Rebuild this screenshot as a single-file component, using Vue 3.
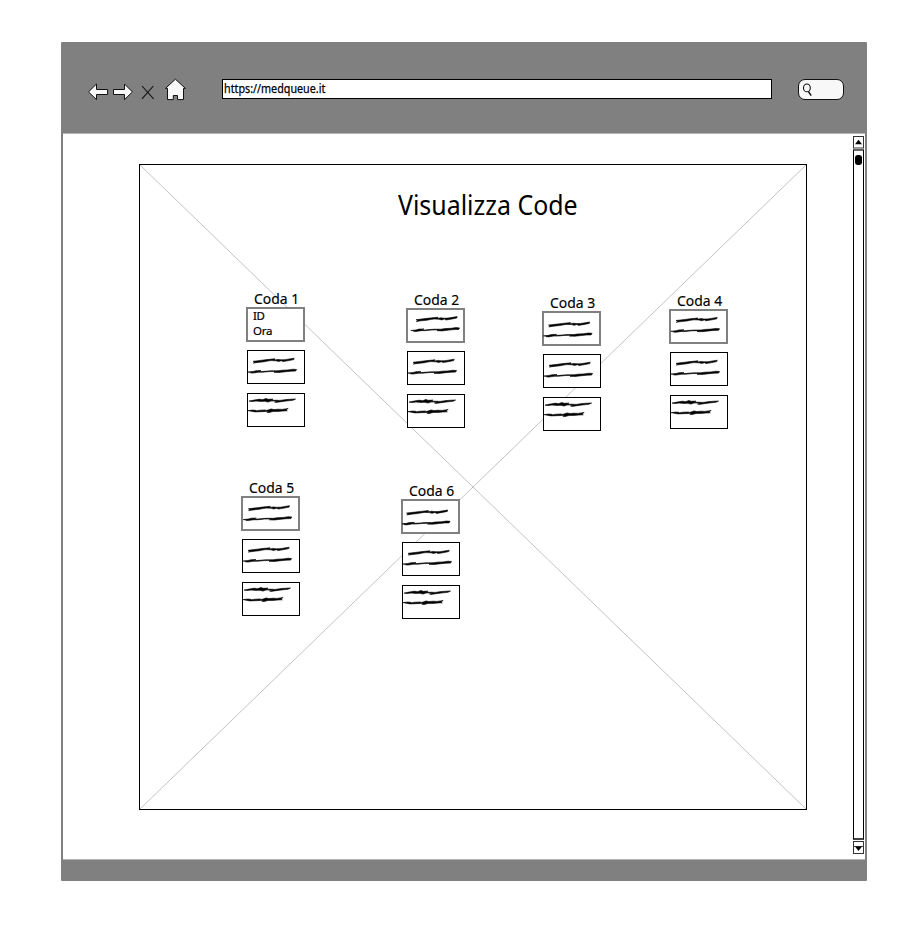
<script setup>
const rows = [
  [
    { n: 1, lines: ['ID', 'Ora'] },
    { n: 2, dx: 3, dy: -0.6 },
    { n: 3, dx: -0.5, dy: 1.8 },
    { n: 4, dx: 0, dy: -0.8 },
  ],
  [
    { n: 5, dx: 0.3, dy: 0.5 },
    { n: 6, dx: -1.5, dy: 1.8 },
  ],
]

const wide =
  'M6 11.3L15 10.2L20 9.6L28 8.8L27.2 10L31 9.4L34 9.8L38 9.7L41 9.2L47.2 8.2L46.8 9.6L42 10.6L36 11.6L34.5 10.7L31.5 11.5L29 10.8L24 10.6L20.5 11.1L17 11.8L11 12.4L6.3 13.1L7.8 12Z' +
  'M0.8 22.1L6 21.5L9 20.7L14 20.6L10.5 21.5L15 21.5L20 21.1L24 20.8L31 20.8L35 20.2L41 19.9L46 19.2L49.6 19.5L48.6 21.1L44 21.2L39 21.7L32 22.5L27 22.3L29 21.5L22 21.6L16 22.2L11 22.3L6 23.1L3.5 22.8L5 22.4Z'
const short =
  'M2 8.1L7 7.1L12 6.2L14.5 6.5L11 7.6L16 6.6L19 5.4L21 6.3L26 6.1L23.5 7.2L28 7.2L33 7.4L39 6.6L44 6.2L48.6 6L46 7.3L41 7.8L36 8.4L29 9.4L27.5 8.9L31 8L24 8L21 9.1L18 8.3L14 8.4L9 8.1L5 8.6Z' +
  'M1 17.6L6 17L9 17.4L7.5 18L13 17.2L18.5 17L16.5 17.9L21 17.1L24 15.9L27 16.6L31 16.2L35 16.4L41.2 15.5L39 16.8L40.3 17.8L36 18L31 18.4L26 18.5L22 19.6L19.8 19.2L22 18.3L14 18.7L8 18.9L4 18.2Z'
</script>

<template>
  <div class="page">
    <div class="browser">
      <header class="toolbar">
        <svg class="nav" width="100" height="24" viewBox="87 78 100 24">
          <g fill="#f8f8f8" stroke="#111" stroke-width="1">
            <path d="M88.5 91.9L96.5 84V89.5H107.6V94.5H96.5V99.6Z" />
            <path d="M132.4 91.9L124.5 84V89.5H113.5V94.5H124.5V99.6Z" />
            <path d="M175.4 79.2L165.5 88.4H167.5V99.6H173.3V95.5H177.5V99.6H183.5V88.4H185.4Z" />
          </g>
          <path d="M142 86L153.6 98.8M153.3 86L142 98.8" fill="none" stroke="#111" stroke-width="1.1" />
        </svg>
        <div class="address"><span>https://medqueue.it</span></div>
        <div class="search">
          <svg width="12" height="14" viewBox="0 0 12 14" fill="none" stroke="#111" stroke-width="1.1">
            <ellipse cx="4.9" cy="4.9" rx="3.4" ry="3.9" />
            <path d="M6.3 8.4L9.2 12.6" stroke-width="1.5" />
          </svg>
        </div>
      </header>

      <main class="viewport">
        <section class="frame">
          <svg class="cross" viewBox="0 0 666 644" preserveAspectRatio="none">
            <path d="M0 0L666 644M666 0L0 644" />
          </svg>
          <h1><span>Visualizza Code</span></h1>
          <div v-for="(row, i) in rows" :key="i" class="row" :class="'row-' + (i + 1)">
            <article v-for="q in row" :key="q.n" class="queue" :class="'queue-' + q.n">
              <h2><span>Coda {{ q.n }}</span></h2>
              <div class="card first">
                <template v-if="q.lines">
                  <p v-for="line in q.lines" :key="line">{{ line }}</p>
                </template>
                <svg v-else width="58" height="34" viewBox="0 0 58 34">
                  <path :d="wide" :transform="`translate(${q.dx} ${q.dy})`" />
                </svg>
              </div>
              <div class="card"><svg width="58" height="34" viewBox="0 0 58 34"><path :d="wide" /></svg></div>
              <div class="card"><svg width="58" height="34" viewBox="0 0 58 34"><path :d="short" /></svg></div>
            </article>
          </div>
        </section>

        <aside class="scrollbar">
          <svg width="12" height="13" viewBox="0 0 12 13">
            <rect x="1.5" y="0.5" width="10" height="11.5" fill="#fff" stroke="#333" />
            <path d="M3 8.3L6.5 3.8L10 8.3Z" />
          </svg>
          <div class="track"><div class="thumb"></div></div>
          <svg width="12" height="13" viewBox="0 0 12 13">
            <rect x="1.5" y="0.5" width="10" height="12" fill="#fff" stroke="#333" />
            <path d="M2 5.5H11" stroke="#444" />
            <path d="M3 5.5L6.5 10L10 5.5Z" />
          </svg>
        </aside>
      </main>
    </div>
  </div>
</template>

<style>
body {
  margin: 0;
  background: #fff;
}
</style>

<style scoped>
* {
  box-sizing: border-box;
}
.page {
  width: 923px;
  height: 945px;
  padding: 42px 0 0 61px;
  background: #fff;
  color: #000;
  font-family: 'Noto Sans', 'Open Sans', sans-serif;
}
svg {
  display: block;
  flex: none;
}
h1,
h2,
p {
  margin: 0;
  font-weight: 400;
  white-space: nowrap;
}
.browser {
  width: 806px;
  height: 839px;
  padding: 0 2px;
  border-radius: 1px;
  background: #808080;
}
.toolbar {
  display: flex;
  align-items: flex-start;
  height: 91px;
  padding: 36px 0 0 24px;
}
.address {
  width: 550px;
  height: 20px;
  margin: 1px 0 0 35px;
  padding-left: 1px;
  border: 1px solid #000;
  background: #fff;
  font-size: 12.5px;
  line-height: 18px;
  white-space: nowrap;
}
.address span {
  display: inline-block;
  transform: scaleX(0.86);
  transform-origin: 0 50%;
  -webkit-text-stroke: 0.25px #000;
}
.search {
  width: 46px;
  height: 21px;
  margin: 1px 0 0 26px;
  padding: 3px 0 0 3px;
  border: 1px solid #111;
  border-radius: 7px;
  background: #f8f8f8;
}
.viewport {
  display: flex;
  height: 727px;
  border-top: 1px solid #b4b4b4;
  border-bottom: 1px solid #b4b4b4;
  background: #fff;
}
.frame {
  position: relative;
  width: 668px;
  height: 646px;
  margin: 30px 0 0 76px;
  border: 1px solid #000;
}
.cross {
  position: absolute;
  inset: 0;
  width: 666px;
  height: 644px;
}
.cross path {
  fill: none;
  stroke: #b4b4b4;
  stroke-width: 0.8;
}
h1 {
  position: relative;
  height: 125px;
  padding: 22px 0 0 258px;
  font-size: 26.5px;
  line-height: 36px;
}
h1 span,
h2 span {
  display: inline-block;
  transform: scaleX(0.94);
  transform-origin: 0 50%;
}
.row {
  position: relative;
  display: flex;
  align-items: flex-start;
}
.row-1 {
  height: 189px;
  padding-left: 107px;
}
.row-2 {
  padding-left: 102px;
}
.queue {
  width: 58px;
}
.queue-2 {
  margin: 1px 0 0 102px;
}
.queue-3 {
  margin: 4px 0 0 78px;
}
.queue-4 {
  margin: 2px 0 0 69px;
}
.queue-6 {
  margin: 3px 0 0 102px;
}
h2 {
  height: 18px;
  padding-left: 7px;
  font-size: 14.8px;
  line-height: 16px;
}
h2 span {
  -webkit-text-stroke: 0.15px #000;
}
.card {
  width: 58px;
  height: 34px;
  margin-bottom: 9px;
  border: 1px solid #000;
  background: #fff;
}
.card svg {
  margin: -1px;
}
.card path {
  stroke: #000;
  stroke-width: 0.6;
  stroke-linejoin: round;
}
.card.first {
  width: 59px;
  height: 35px;
  margin: -1px 0 8px -1px;
  border: 2px solid #808080;
}
.card p {
  position: relative;
  top: -1px;
  padding-left: 5px;
  font-size: 11.5px;
  line-height: 15px;
  letter-spacing: -0.3px;
  -webkit-text-stroke: 0.2px #000;
}
.scrollbar {
  display: flex;
  flex-direction: column;
  width: 12px;
  margin: 2px 0 0 45px;
}
.track {
  width: 11px;
  height: 691px;
  margin: 0 0 1px 1px;
  padding: 4px 1px 0;
  border: 1px solid #000;
  border-top: 2px solid #666;
  border-bottom: 2px solid #444;
}
.thumb {
  width: 7px;
  height: 10px;
  border-radius: 3px;
  background: #000;
}
</style>
